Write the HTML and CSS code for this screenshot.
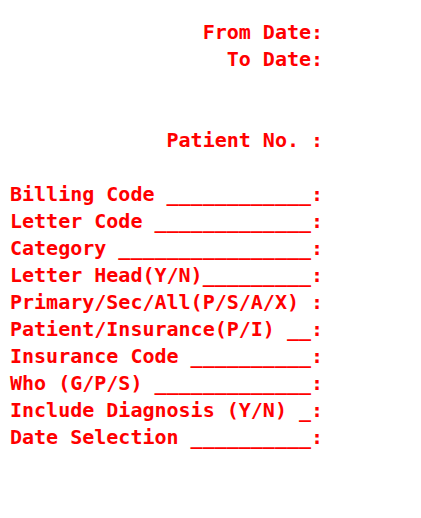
FILE: index.html
```html
<!DOCTYPE html>
<html>
<head>
<meta charset="utf-8">
<link rel="stylesheet" href="styles.css">
</head>
<body>
<pre class="form">                From Date:
                  To Date:


             Patient No. :

Billing Code ____________:
Letter Code _____________:
Category ________________:
Letter Head(Y/N)_________:
Primary/Sec/All(P/S/A/X) :
Patient/Insurance(P/I) __:
Insurance Code __________:
Who (G/P/S) _____________:
Include Diagnosis (Y/N) _:
Date Selection __________:</pre>
</body>
</html>
```

FILE: styles.css
```css
html, body {
  margin: 0;
  padding: 0;
  background: #ffffff;
}

body {
  padding: 19px 0 0 10px;
}

.form {
  margin: 0;
  font-family: "DejaVu Sans Mono", "Liberation Mono", monospace;
  font-weight: bold;
  font-size: 20px;
  line-height: 27px;
  color: #ff0000;
  white-space: pre;
}
```
